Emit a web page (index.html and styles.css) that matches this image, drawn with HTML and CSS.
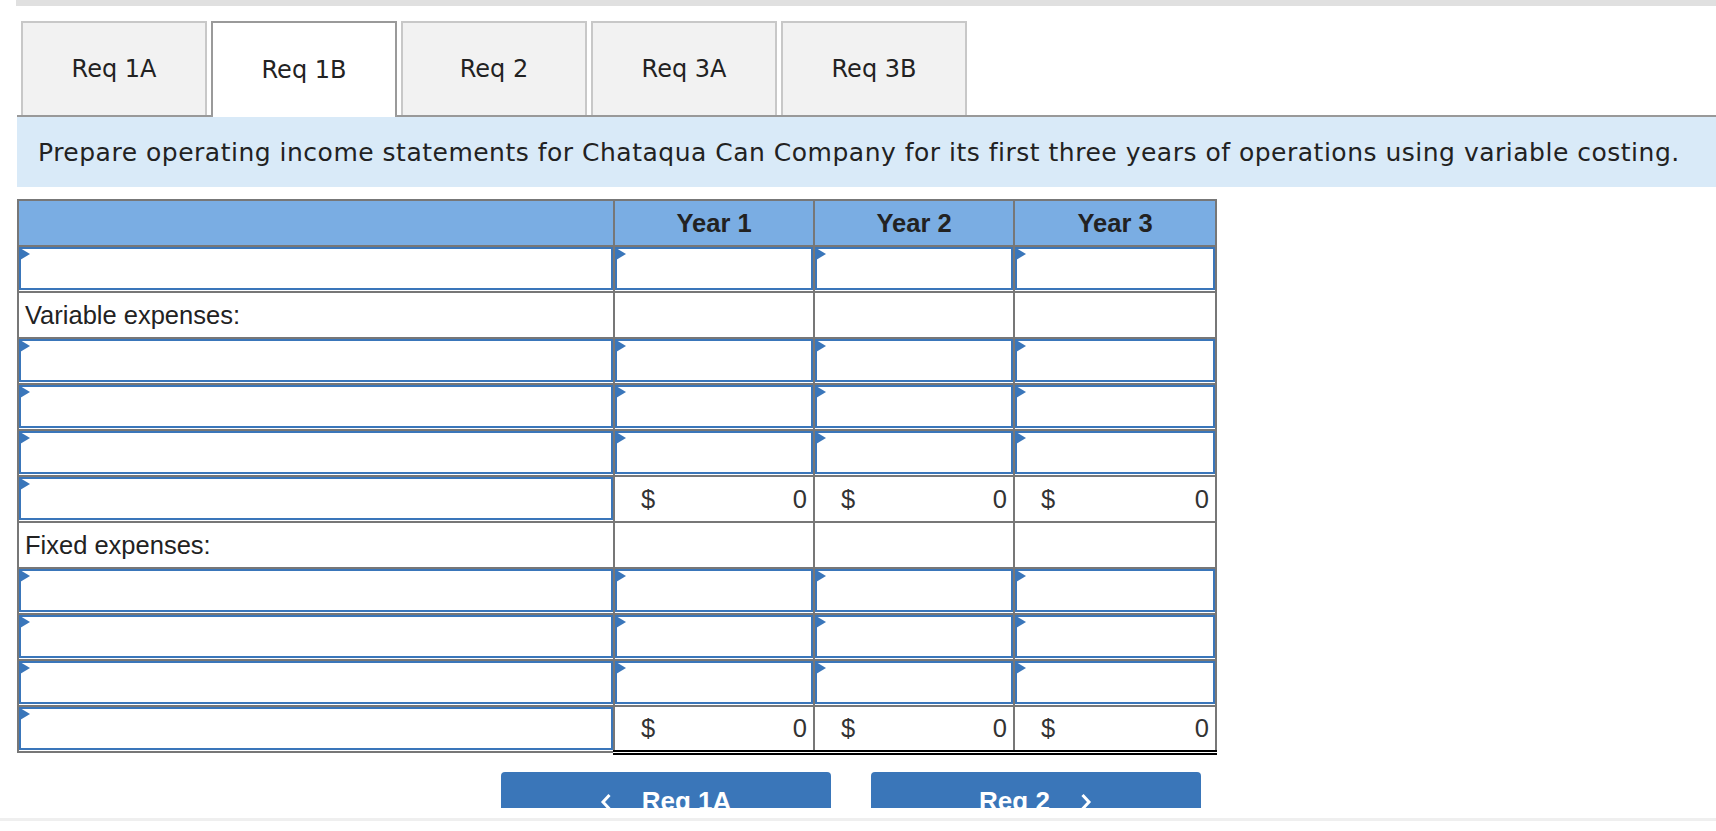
FILE: index.html
```html
<!DOCTYPE html>
<html>
<head>
<meta charset="utf-8">
<link rel="stylesheet" href="styles.css">
</head>
<body>
<div class="topbar"></div>
<div class="content">
  <div class="tabs">
    <div class="tab">Req 1A</div>
    <div class="tab active">Req 1B</div>
    <div class="tab">Req 2</div>
    <div class="tab">Req 3A</div>
    <div class="tab">Req 3B</div>
  </div>
  <div class="instr">Prepare operating income statements for Chataqua Can Company for its first three years of operations using variable costing.</div>
  <table class="stmt">
    <colgroup><col class="c-label"><col class="c-year"><col class="c-year"><col class="c-year3"></colgroup>
    <thead>
      <tr><th></th><th>Year 1</th><th>Year 2</th><th>Year 3</th></tr>
    </thead>
    <tbody>
      <tr><td><div class="inp"></div></td><td><div class="inp"></div></td><td><div class="inp"></div></td><td><div class="inp"></div></td></tr>
      <tr><td class="lbl">Variable expenses:</td><td></td><td></td><td></td></tr>
      <tr><td><div class="inp"></div></td><td><div class="inp"></div></td><td><div class="inp"></div></td><td><div class="inp"></div></td></tr>
      <tr><td><div class="inp"></div></td><td><div class="inp"></div></td><td><div class="inp"></div></td><td><div class="inp"></div></td></tr>
      <tr><td><div class="inp"></div></td><td><div class="inp"></div></td><td><div class="inp"></div></td><td><div class="inp"></div></td></tr>
      <tr class="total"><td><div class="inp"></div></td><td class="amt"><div class="amtin"><span>$</span><span>0</span></div></td><td class="amt"><div class="amtin"><span>$</span><span>0</span></div></td><td class="amt"><div class="amtin"><span>$</span><span>0</span></div></td></tr>
      <tr><td class="lbl">Fixed expenses:</td><td></td><td></td><td></td></tr>
      <tr><td><div class="inp"></div></td><td><div class="inp"></div></td><td><div class="inp"></div></td><td><div class="inp"></div></td></tr>
      <tr><td><div class="inp"></div></td><td><div class="inp"></div></td><td><div class="inp"></div></td><td><div class="inp"></div></td></tr>
      <tr><td><div class="inp"></div></td><td><div class="inp"></div></td><td><div class="inp"></div></td><td><div class="inp"></div></td></tr>
      <tr class="total final"><td><div class="inp"></div></td><td class="amt"><div class="amtin"><span>$</span><span>0</span></div></td><td class="amt"><div class="amtin"><span>$</span><span>0</span></div></td><td class="amt"><div class="amtin"><span>$</span><span>0</span></div></td></tr>
    </tbody>
  </table>
  <div class="nav">
    <div class="btn"><svg class="chev" width="12" height="18" viewBox="0 0 12 18"><polyline points="9.5,2 3,9 9.5,16" fill="none" stroke="#fff" stroke-width="3"/></svg><span>Req 1A</span></div>
    <div class="btn"><span>Req 2</span><svg class="chev" width="12" height="18" viewBox="0 0 12 18"><polyline points="2.5,2 9,9 2.5,16" fill="none" stroke="#fff" stroke-width="3"/></svg></div>
  </div>
</div>
<div class="footline"></div>
</body>
</html>
```
FILE: styles.css
```css
html, body {
  margin: 0;
  padding: 0;
  background: #fff;
}
body {
  width: 1716px;
  height: 831px;
  overflow: hidden;
}
.topbar {
  margin-left: 16px;
  height: 6px;
  background: #e0e0e0;
}
.content {
  height: 802px;
  overflow: hidden;
  padding-left: 17px;
}
.tabs {
  margin-top: 15px;
  display: flex;
  gap: 4px;
  padding-left: 4px;
  border-bottom: 2px solid #999;
  height: 94px;
}
.tab {
  box-sizing: border-box;
  width: 186px;
  height: 94px;
  border: 2px solid #c8c8c8;
  border-bottom: none;
  background: #f2f2f2;
  display: flex;
  align-items: center;
  justify-content: center;
  font-family: "DejaVu Sans", Verdana, sans-serif;
  font-size: 24px;
  color: #222;
}
.tab.active {
  background: #fff;
  border-color: #9a9a9a;
  height: 96px;
  position: relative;
  z-index: 1;
}
.instr {
  height: 70px;
  background: #d9eaf8;
  display: flex;
  align-items: center;
  padding-left: 21px;
  font-family: "DejaVu Sans", Verdana, sans-serif;
  font-size: 25px;
  letter-spacing: 0.5px;
  color: #222;
  white-space: nowrap;
}
.stmt {
  margin-top: 12px;
  border-collapse: collapse;
  width: 1198px;
  table-layout: fixed;
  font-family: "Liberation Sans", Arial, sans-serif;
  font-size: 25.5px;
  color: #222;
  border: 2px solid #777;
}
.c-label { width: 596px; }
.c-year { width: 200px; }
.c-year3 { width: 202px; }
.stmt tr { height: 46px; }
.stmt th, .stmt td {
  border: 2px solid #777;
  padding: 0;
  height: 46px;
  box-sizing: border-box;
  vertical-align: middle;
}
.stmt th {
  background: #7aade3;
  font-weight: bold;
  text-align: center;
  color: #222;
}
.stmt td.lbl {
  padding-left: 6px;
}
.inp {
  position: relative;
  box-sizing: border-box;
  height: 43px;
  margin-bottom: 1px;
  border: 2px solid #3a76ba;
  background: #fff;
}
.inp::before {
  content: "";
  position: absolute;
  left: -1px;
  top: -1px;
  border-left: 10px solid #3a76ba;
  border-top: 6.5px solid transparent;
  border-bottom: 6.5px solid transparent;
}
.stmt tr.total td.amt {
  border-top: 2px solid #000;
}
.stmt tr.final td.amt {
  border-bottom: 5px double #000;
}
.stmt tr.final td {
  height: 44px;
}
.amtin {
  display: flex;
  justify-content: space-between;
  padding: 0 6px 0 26px;
  color: #333;
}
.nav {
  margin-top: 17px;
  display: flex;
  justify-content: center;
  gap: 40px;
  padding-right: 32px;
}
.btn {
  width: 330px;
  height: 60px;
  background: #3a76b9;
  border-radius: 4px;
  display: flex;
  align-items: center;
  justify-content: center;
  gap: 30px;
  font-family: "Liberation Sans", Arial, sans-serif;
  font-weight: bold;
  font-size: 26px;
  color: #fff;
}
.chev { display: block; }
.footline {
  margin-top: 10px;
  height: 3px;
  background: #efefef;
}
```
